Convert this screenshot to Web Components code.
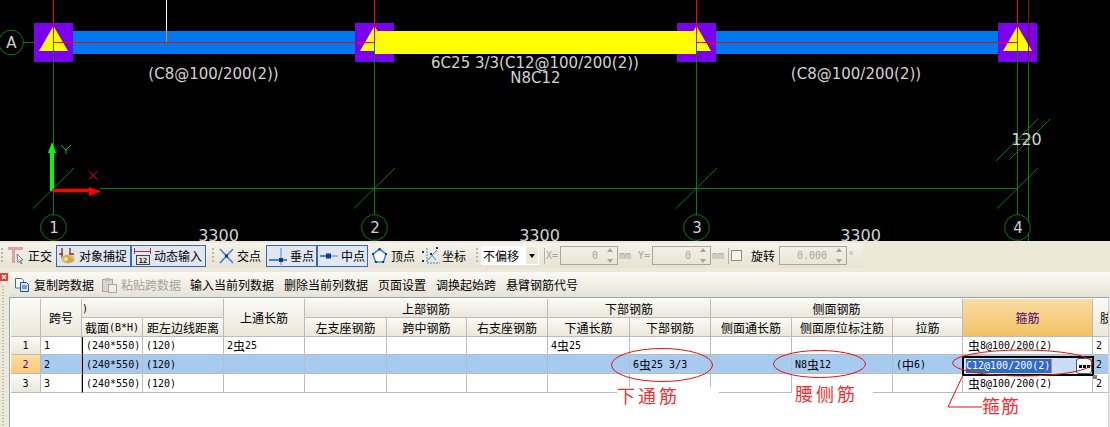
<!DOCTYPE html>
<html lang="zh">
<head>
<meta charset="utf-8">
<title>Beam rebar input</title>
<style>
  html, body { margin: 0; padding: 0; background: #ece9d8; }
  body { width: 1110px; height: 427px; overflow: hidden; position: relative; font: 12px "Noto Sans CJK SC", sans-serif; }
</style>
</head>
<body>
<cad-canvas></cad-canvas>

<cad-toolbar>
  <tool-grip style="margin-right:2px"></tool-grip>
  <tool-btn label="正交" width="51" gap="4"><svg slot="icon" width="16" height="17" viewBox="0 0 16 17"><path d="M0 0h15v3H7v13H4V3H0z" fill="#dfa2a2"/><path d="M9 7l6 6-2.500.5 1.500 3-1 .5-1.500-3L10 15.500z" fill="#f4f6fa" stroke="#56607a" stroke-width=".8"/></svg></tool-btn>
  <tool-btn label="对象捕捉" width="75" active><svg slot="icon" width="17" height="18" viewBox="0 0 17 18"><path d="M0 7h4M10 7h5M3 1v10M11 1v8" stroke="#8a3030" stroke-width="1.400" fill="none"/><ellipse cx="9" cy="12" rx="7" ry="4.500" fill="#e4c468"/><path d="M4 10l4-2 5 3 2 3-6 2-4-2z" fill="#c9a94a"/><circle cx="7" cy="12" r="2" fill="#f3e3a0"/></svg></tool-btn>
  <tool-btn label="动态输入" width="75" active><svg slot="icon" width="17" height="18" viewBox="0 0 17 18"><path d="M.5 1v6M16.500 1v6M.5 4.500h16" stroke="#a33" fill="none"/><rect x="2.500" y="8.500" width="13" height="9" fill="#e4e4dc" stroke="#444"/><text x="9" y="16" font-family="DejaVu Sans Mono" font-size="7" font-weight="700" text-anchor="middle" fill="#222">12</text></svg></tool-btn>
  <tool-grip style="margin-left:6px;margin-right:1px"></tool-grip>
  <tool-btn label="交点" width="51" gap="2"><svg slot="icon" width="17" height="18" viewBox="0 0 17 18"><path d="M2 2l13 14M15 2L2 16" stroke="#3d86d8" stroke-width="1.600"/><rect x="7" y="7.500" width="3" height="3" fill="#123a8c"/></svg></tool-btn>
  <tool-btn label="垂点" width="51" active><svg slot="icon" width="18" height="18" viewBox="0 0 18 18"><path d="M0 13h18" stroke="#3d86d8" stroke-width="2"/><path d="M12 1v17" stroke="#6ea5e0" stroke-width="1.400"/><rect x="10" y="11" width="4" height="4" fill="#123a8c"/></svg></tool-btn>
  <tool-btn label="中点" width="51" active><svg slot="icon" width="18" height="18" viewBox="0 0 18 18"><path d="M0 9h18" stroke="#8fb8e8" stroke-width="2"/><path d="M0 9h6" stroke="#3d86d8" stroke-width="2"/><rect x="6" y="6.500" width="5" height="5" fill="#123a8c"/></svg></tool-btn>
  <tool-btn label="顶点" width="51" gap="4" pad="4"><svg slot="icon" width="15" height="18" viewBox="0 0 15 18"><path d="M7.500 2L14 7l-2.500 8h-8L1 7z" fill="#fff" stroke="#3d86d8" stroke-width="1.600"/><path d="M6.500 1h2v2h-2zM0 6h2v2H0zM13 6h2v2h-2zM3 14h2v2H3zM10 14h2v2h-2z" fill="#123a8c"/></svg></tool-btn>
  <tool-btn label="坐标" width="51" gap="2"><svg slot="icon" width="18" height="18" viewBox="0 0 18 18"><path d="M5 1v15h13" stroke="#3d86d8" stroke-dasharray="2 1" fill="none"/><path d="M5 14L15 3M9 7l5 6" stroke="#3d86d8" fill="none"/><path d="M0 4h2v2H0zM0 13h2v2H0zM14 0h2v2h-2zM8 6h2v2H8z" fill="#234"/></svg></tool-btn>
  <tool-grip style="margin-left:6px;margin-right:3px"></tool-grip>
  <combo-box>不偏移</combo-box>
  <tool-sep style="margin-left:5px;margin-right:1px"></tool-sep>
  <spin-field prefix="X=" unit="mm" value="0" width="58"></spin-field>
  <spin-field prefix="Y=" unit="mm" value="0" width="59" style="margin-left:7px"></spin-field>
  <tool-sep style="margin-left:4px;margin-right:2px"></tool-sep>
  <tool-check></tool-check>
  <spin-field prefix="旋转" unit="°" value="0.000" width="68" named style="margin-left:9px"></spin-field>
</cad-toolbar>

<dock-panel>
  <action-bar>
    <action-btn label="复制跨数据" width="87" icon="copy"></action-btn>
    <action-btn label="粘贴跨数据" width="89" icon="paste" disabled></action-btn>
    <action-btn label="输入当前列数据" width="94"></action-btn>
    <action-btn label="删除当前列数据" width="94"></action-btn>
    <action-btn label="页面设置" width="58"></action-btn>
    <action-btn label="调换起始跨" width="70"></action-btn>
    <action-btn label="悬臂钢筋代号" width="83"></action-btn>
  </action-bar>
  <rebar-grid></rebar-grid>
</dock-panel>
<note-layer></note-layer>

<script>
// green axis bubble, drawn as a low-sided polygon like the CAD view does
function bubble(cx, cy, r) {
  const pts = [];
  for (let i = 0; i < 12; i++) {
    const a = (Math.PI * 2 * i) / 12 + Math.PI / 12;
    pts.push((cx + r * Math.cos(a)).toFixed(1) + "," + (cy + r * Math.sin(a)).toFixed(1));
  }
  return `<polygon points="${pts.join(" ")}" fill="#000" stroke="#0a7a0a"/>`;
}

class CadCanvas extends HTMLElement {
  constructor() {
    super();
    this.attachShadow({ mode: "open" });
  }

  connectedCallback() {
    const xs = [53.5, 374.5, 696.5, 1017.5];
    let columns = "";
    xs.forEach((x) => {
      columns += `<rect x="${x - 19.5}" y="23" width="39" height="39" fill="#7b00f0"/>`;
      columns += `<polygon points="${x},26 ${x + 14.5},51 ${x - 14.5},51" fill="#ff0"/>`;
    });
    let grid = "";
    xs.forEach((x) => {
      grid += `<path class="g" d="M${x} 42V241"/>`;
      grid += `<path class="g" d="M${x - 20.5} 208.5L${x + 20.5} 168"/>`;
      grid += `<path class="r" d="M${x} 0V42.5"/>`;
    });
    let bubbles = "";
    ["1", "2", "3", "4"].forEach((n, i) => {
      bubbles += bubble(xs[i], 227.5, 13);
      bubbles += `<text x="${xs[i] + 0.5}" y="233" text-anchor="middle">${n}</text>`;
    });
    this.shadowRoot.innerHTML = `
      <style>
        :host { display: block; height: 241px; background: #000; overflow: hidden; }
        svg { display: block; }
        .g { stroke: #0a7a0a; fill: none; stroke-width: 1; }
        .r { stroke: #f00; fill: none; stroke-width: 1; }
        text { font: 15px "DejaVu Sans", sans-serif; fill: #d2d2d2; }
      </style>
      <svg width="1110" height="241" viewBox="0 0 1110 241">
        <path class="g" d="M0 42.5H40M100 188.5H1017.5"/>
        <rect x="70" y="31" width="305" height="23" fill="#0078f0"/>
        <rect x="700" y="31" width="300" height="23" fill="#0078f0"/>
        ${columns}
        <rect x="375" y="31" width="321" height="23" fill="#ff0"/>
        <path class="r" d="M53 42.5H374.5M696.5 42.5H1017.5"/>
        ${grid}
        <path d="M166.5 0V31" stroke="#fff"/>
        <path d="M166.5 31V42" stroke="#f08020"/>
        <path d="M1028.5 0V62" stroke="#a00000" fill="none"/>
        <path class="g" d="M1028.5 62V241M1017.5 139.5H1028.5M996 161L1038 119M1009 160L1050 119"/>
        <text x="213.5" y="79" text-anchor="middle">(C8@100/200(2))</text>
        <text x="535" y="68" text-anchor="middle">6C25 3/3(C12@100/200(2))</text>
        <text x="535.5" y="83" text-anchor="middle">N8C12</text>
        <text x="856" y="79" text-anchor="middle">(C8@100/200(2))</text>
        <text x="1026.5" y="145" text-anchor="middle" style="font-size:16px">120</text>
        ${bubble(11, 42.5, 12.5)}
        <text x="11.5" y="48" text-anchor="middle">A</text>
        ${bubbles}
        <text x="218.5" y="241" text-anchor="middle" style="font-size:16px">3300</text>
        <text x="539.5" y="241" text-anchor="middle" style="font-size:16px">3300</text>
        <text x="860.5" y="241" text-anchor="middle" style="font-size:16px">3300</text>
        <path d="M52 191V152" stroke="#0f0" stroke-width="4"/>
        <path d="M52 142l4 11h-8z" fill="#0f0"/>
        <path d="M52 190.5H90" stroke="#f00" stroke-width="3.5"/>
        <path d="M101 191.5l-12-4.5v9z" fill="#f00"/>
        <path d="M61 145l5 5 5-5M66 150v4" stroke="#0c0" fill="none"/>
        <path d="M89 171l8.500 8.500M97.500 171L89 179.500" stroke="#e00" fill="none"/>
      </svg>`;
  }
}

class CadToolbar extends HTMLElement {
  constructor() {
    super();
    this.attachShadow({ mode: "open" });
    this.shadowRoot.innerHTML = `
      <style>
        :host { display: block; height: 31px; box-sizing: border-box; padding-top: 2px; background: #ece9d8; }
        div {
          display: flex; align-items: center; box-sizing: border-box;
          width: 863px; height: 25px; padding-left: 1px;
          background: linear-gradient(#f5f3ea, #e6e3d4);
          border-radius: 0 3px 3px 0;
        }
      </style>
      <div><slot></slot></div>`;
  }
}

class ToolBtn extends HTMLElement {
  constructor() {
    super();
    this.attachShadow({ mode: "open" });
  }

  connectedCallback() {
    const active = this.hasAttribute("active");
    const gap = this.getAttribute("gap") || "3";
    const pad = this.getAttribute("pad") || "3";
    this.shadowRoot.innerHTML = `
      <style>
        :host {
          display: flex; align-items: center; box-sizing: border-box; height: 22px; flex: none;
          width: ${this.getAttribute("width")}px; padding-left: ${pad}px; gap: ${gap}px;
          color: #000; font: 12px/14px "Noto Sans CJK SC", sans-serif; white-space: nowrap;
          ${active ? "border: 1px solid #316ac5; background: #e1e6f0; padding-left: 2px;" : ""}
        }
        slot[name="icon"] { display: flex; }
        ::slotted(svg) { display: block; }
      </style>
      <slot name="icon"></slot><span>${this.getAttribute("label")}</span>`;
  }
}

class ToolGrip extends HTMLElement {
  constructor() {
    super();
    this.attachShadow({ mode: "open" });
    this.shadowRoot.innerHTML = `
      <style>
        :host {
          display: block; width: 2px; height: 16px; flex: none;
          background: repeating-linear-gradient(#bdbaa8 0 2px, transparent 2px 4px);
        }
      </style>`;
  }
}

class ToolSep extends HTMLElement {
  constructor() {
    super();
    this.attachShadow({ mode: "open" });
    this.shadowRoot.innerHTML = `
      <style>
        :host { display: block; width: 1px; height: 16px; background: #b5b2a2; flex: none; }
      </style>`;
  }
}

class ToolCheck extends HTMLElement {
  constructor() {
    super();
    this.attachShadow({ mode: "open" });
    this.shadowRoot.innerHTML = `
      <style>
        :host { display: block; width: 11px; height: 11px; box-sizing: border-box; border: 1px solid #8f8f88; background: #f4f3ec; flex: none; }
      </style>`;
  }
}

class ComboBox extends HTMLElement {
  constructor() {
    super();
    this.attachShadow({ mode: "open" });
    this.shadowRoot.innerHTML = `
      <style>
        :host {
          display: flex; align-items: center; justify-content: space-between; box-sizing: border-box;
          width: 58px; height: 19px; padding: 0 1px 0 2px; background: #fff; flex: none;
          font: 12px/14px "Noto Sans CJK SC", sans-serif;
        }
        i { display: flex; align-items: center; justify-content: center; width: 12px; height: 17px; background: #ece9d8; }
        i::after { content: ""; border: 3px solid transparent; border-top: 4px solid #000; border-bottom: 0; }
      </style>
      <span><slot></slot></span><i></i>`;
  }
}

class SpinField extends HTMLElement {
  constructor() {
    super();
    this.attachShadow({ mode: "open" });
  }

  connectedCallback() {
    const named = this.hasAttribute("named");
    this.shadowRoot.innerHTML = `
      <style>
        :host { display: flex; align-items: center; flex: none; }
        .pre { color: ${named ? "#000" : "#a8a698"}; width: ${named ? 28 : 14}px; font: ${named ? '12px/14px "Noto Sans CJK SC"' : '10px "DejaVu Sans Mono"'}, sans-serif; }
        .box {
          display: flex; align-items: center; justify-content: flex-end; box-sizing: border-box;
          width: ${this.getAttribute("width")}px; height: 19px; border: 1px solid #a9a79a; padding-right: 19px;
          position: relative; color: #a8a698; font: 10px "DejaVu Sans Mono", monospace;
        }
        .box i { position: absolute; right: 4px; width: 0; border: 3px solid transparent; }
        .up { top: 1px; border-bottom: 4px solid #a8a698 !important; border-top: 0 !important; }
        .dn { bottom: 1px; border-top: 4px solid #a8a698 !important; border-bottom: 0 !important; }
        .unit { color: #a8a698; font: 10px "DejaVu Sans Mono", monospace; margin-left: 1px; }
      </style>
      <span class="pre">${this.getAttribute("prefix")}</span>
      <span class="box">${this.getAttribute("value")}<i class="up"></i><i class="dn"></i></span>
      <span class="unit">${this.getAttribute("unit")}</span>`;
  }
}

// left strip with the red close box and dotted grip, panel content beside it
class DockPanel extends HTMLElement {
  constructor() {
    super();
    this.attachShadow({ mode: "open" });
    this.shadowRoot.innerHTML = `
      <style>
        :host { display: flex; height: 155px; background: #ece9d8; }
        .strip { display: flex; flex-direction: column; align-items: flex-start; width: 9px; flex: none; }
        .close {
          display: flex; width: 8px; height: 8px; margin-top: 1px; background: #d8402e; border-radius: 1px;
        }
        .close svg { display: block; }
        .dots {
          width: 2px; flex: 1; margin: 5px 0 0 2px;
          background: repeating-linear-gradient(#b9b6a4 0 1px, transparent 1px 3px);
        }
        .main { display: flex; flex-direction: column; flex: 1; min-width: 0; }
      </style>
      <div class="strip">
        <div class="close"><svg width="8" height="8" viewBox="0 0 8 8"><path d="M2 2l4 4M6 2L2 6" stroke="#fff" stroke-width="1.300"/></svg></div>
        <div class="dots"></div>
      </div>
      <div class="main"><slot></slot></div>`;
  }
}

class ActionBar extends HTMLElement {
  constructor() {
    super();
    this.attachShadow({ mode: "open" });
    this.shadowRoot.innerHTML = `
      <style>
        :host {
          display: flex; align-items: center; box-sizing: border-box; flex: none;
          height: 25px; margin-left: 1px; padding-left: 4px;
          background: linear-gradient(#fbfaf5, #e6e3d5);
        }
      </style>
      <slot></slot>`;
  }
}

class ActionBtn extends HTMLElement {
  constructor() {
    super();
    this.attachShadow({ mode: "open" });
  }

  connectedCallback() {
    const icons = {
      copy: `<svg width="16" height="16" viewBox="0 0 16 16"><path d="M1.500 1.500h6l2 2V11h-8z" fill="#fff" stroke="#3a6ea5"/><path d="M6.500 5.500h6l2 2v7h-8z" fill="#d6e6f8" stroke="#1d4f9c"/><path d="M8 9h5M8 11h5" stroke="#1d4f9c"/></svg>`,
      paste: `<svg width="16" height="16" viewBox="0 0 16 16"><rect x="1.500" y="2.500" width="10" height="12" fill="#d8d6cc" stroke="#aaa89c"/><rect x="4" y="1" width="5" height="3" fill="#bdbbb0"/><rect x="7.500" y="7.500" width="8" height="8" fill="#eeede6" stroke="#aaa89c"/></svg>`,
    };
    const icon = icons[this.getAttribute("icon")] || "";
    this.shadowRoot.innerHTML = `
      <style>
        :host {
          display: flex; align-items: center; gap: 4px; flex: none; white-space: nowrap;
          width: ${this.getAttribute("width")}px;
          color: ${this.hasAttribute("disabled") ? "#a5a398" : "#000"};
          font: 12px/14px "Noto Sans CJK SC", sans-serif;
        }
        svg { display: block; }
      </style>
      ${icon}<span>${this.getAttribute("label")}</span>`;
  }
}

class RebarGrid extends HTMLElement {
  constructor() {
    super();
    this.attachShadow({ mode: "open" });
  }

  // latin text is the small mono face, CJK stays at 12px
  fmt(s) {
    return s.replace(/[\u4e00-\u9fff]+/g, (m) => `<b>${m}</b>`);
  }

  connectedCallback() {
    // text, column, column span, row, row span, class
    const heads = [
      ["", 1, 1, 1, 2, ""],
      ["跨号", 2, 1, 1, 2, ""],
      [")", 3, 2, 1, 1, "left"],
      ["上通长筋", 5, 1, 1, 2, ""],
      ["上部钢筋", 6, 3, 1, 1, ""],
      ["下部钢筋", 9, 2, 1, 1, ""],
      ["侧面钢筋", 11, 3, 1, 1, ""],
      ["箍筋", 14, 1, 1, 2, "hoop"],
      ["肢", 15, 1, 1, 2, "limb"],
    ];
    const subs = ["截面(B*H)", "距左边线距离", null, "左支座钢筋", "跨中钢筋", "右支座钢筋", "下通长筋", "下部钢筋", "侧面通长筋", "侧面原位标注筋", "拉筋"];
    const rows = [
      ["1", "1", "(240*550)", "(120)", "2虫25", "", "", "", "4虫25", "", "", "", "", "虫8@100/200(2)", "2"],
      ["2", "2", "(240*550)", "(120)", "", "", "", "", "", "6虫25 3/3", "", "N8虫12", "(中6)", "", "2"],
      ["3", "3", "(240*550)", "(120)", "", "", "", "", "", "", "", "", "", "虫8@100/200(2)", "2"],
    ];

    let cells = "";
    heads.forEach(([t, col, cs, row, rs, cls]) => {
      cells += `<div class="h ${cls}" style="grid-column:${col}/span ${cs};grid-row:${row}/span ${rs}">${this.fmt(t)}</div>`;
    });
    let subCol = 3;
    subs.forEach((t) => {
      if (t !== null) cells += `<div class="h" style="grid-column:${subCol};grid-row:2">${this.fmt(t)}</div>`;
      subCol++;
    });
    rows.forEach((r, i) => {
      const sel = i === 1 ? " sel" : "";
      r.forEach((t, c) => {
        const cls = c === 0 ? "rowhead" : c === 2 ? "freeze" : c === 13 ? "hoopcell" : "";
        cells += `<div class="c ${cls}${sel}">${this.fmt(t)}</div>`;
      });
    });

    this.shadowRoot.innerHTML = `
      <style>
        :host {
          display: block; box-sizing: border-box; position: relative; flex: 1;
          width: 1100px; background: #fff; overflow: hidden;
          border-top: 1px solid #8ea4bb; border-left: 1px solid #8ea4bb; border-right: 1px solid #c9d4e0;
          padding: 1px 0 0 1px;
        }
        .grid {
          display: grid; width: max-content;
          grid-template-columns: 30px 41px 61px 81px 81px 82px 80px 81px 82px 81px 81px 101px 70px 130px 20px;
          grid-template-rows: 19px 19px 18px 19px 19px;
        }
        .h, .c { box-sizing: border-box; border-right: 1px solid #bcbcbc; border-bottom: 1px solid #bcbcbc; white-space: nowrap; overflow: hidden; }
        .h {
          display: flex; align-items: center; justify-content: center;
          background: linear-gradient(#fbfaf5, #ebe8da); color: #000;
          font: 10px/13px "DejaVu Sans Mono", monospace;
        }
        .h.left { justify-content: flex-start; }
        .h.limb { justify-content: flex-start; padding-left: 7px; }
        .h.hoop { background: linear-gradient(#fadda3, #f1c264); color: #50007a; }
        .c {
          display: flex; align-items: center; padding-left: 3px; background: #fff; color: #000;
          font: 10px/13px "DejaVu Sans Mono", monospace;
        }
        .c.hoopcell { padding-left: 5px; }
        .sel { background: #a6caf0; }
        .rowhead { justify-content: center; padding: 0; background: linear-gradient(#fbfaf5, #ebe8da); }
        .rowhead.sel { background: linear-gradient(#ffdc9e, #fbc878); color: #50007a; }
        .freeze { border-left: 1px solid #000; }
        b { font: 12px/13px "Noto Sans CJK SC", sans-serif; }
        .editor {
          position: absolute; left: 952px; top: 58px; width: 132px; height: 20px; box-sizing: border-box;
          display: flex; align-items: center; padding-left: 2px;
          border: 2px solid #000; background: #c8ddf5;
          font: 10px/14px "DejaVu Sans Mono", monospace;
        }
        .editor span { background: #316ac5; color: #fff; border-right: 1px solid #e08a20; padding-right: 1px; }
        .dots {
          position: absolute; right: 0; top: 0; width: 16px; height: 16px; box-sizing: border-box;
          display: flex; align-items: center; justify-content: center; gap: 1px;
          background: #fdfdfb; border: 1px solid #36587a; border-radius: 3px;
        }
        .dots i { width: 3px; height: 3px; background: #000; }
        .handle { position: absolute; right: -5px; bottom: -5px; width: 4px; height: 4px; background: #808080; }
      </style>
      <div class="grid">${cells}</div>
      <div class="editor"><span>C12@100/200(2)</span><div class="dots"><i></i><i></i><i></i></div><div class="handle"></div></div>`;
  }
}

class NoteLayer extends HTMLElement {
  constructor() {
    super();
    this.attachShadow({ mode: "open" });
    this.shadowRoot.innerHTML = `
      <style>
        :host { position: absolute; left: 0; top: 0; width: 1110px; height: 427px; pointer-events: none; }
        svg { display: block; }
        text { font: 18px "Noto Sans CJK SC", sans-serif; fill: #f03030; letter-spacing: 3px; }
        ellipse, path { fill: none; stroke: #e81010; }
      </style>
      <svg width="1110" height="427" viewBox="0 0 1110 427">
        <rect x="617" y="387" width="102" height="20" fill="#fff"/>
        <rect x="792" y="387" width="81" height="20" fill="#fff"/>
        <ellipse cx="662" cy="365" rx="50.500" ry="16.500"/>
        <ellipse cx="819.500" cy="364" rx="46" ry="13.500"/>
        <ellipse cx="1022.500" cy="363" rx="70" ry="13"/>
        <path d="M963 375L948 407H982"/>
        <text x="617" y="403">下通筋</text>
        <text x="795" y="401">腰侧筋</text>
        <text x="982" y="413" style="letter-spacing:1px">箍筋</text>
      </svg>`;
  }
}

customElements.define("cad-canvas", CadCanvas);
customElements.define("cad-toolbar", CadToolbar);
customElements.define("tool-btn", ToolBtn);
customElements.define("tool-grip", ToolGrip);
customElements.define("tool-sep", ToolSep);
customElements.define("tool-check", ToolCheck);
customElements.define("combo-box", ComboBox);
customElements.define("spin-field", SpinField);
customElements.define("dock-panel", DockPanel);
customElements.define("action-bar", ActionBar);
customElements.define("action-btn", ActionBtn);
customElements.define("rebar-grid", RebarGrid);
customElements.define("note-layer", NoteLayer);
</script>
</body>
</html>
